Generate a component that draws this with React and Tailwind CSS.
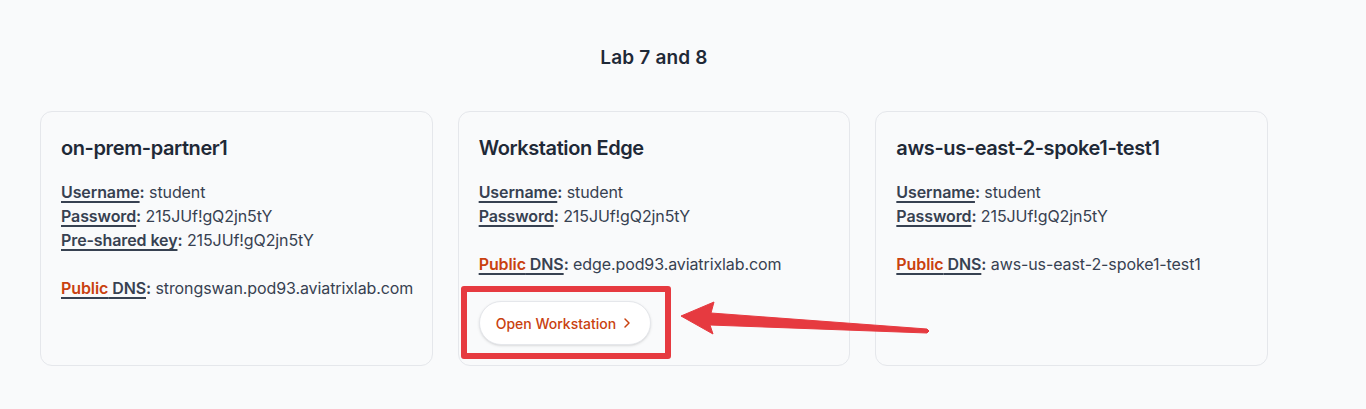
import React from "react";

function Label({ children }) {
  return (
    <span className="font-semibold">
      <span className="underline underline-offset-[3px] decoration-[1.5px]">{children}</span>:
    </span>
  );
}

function DnsLabel() {
  return (
    <span className="font-semibold">
      <span className="underline underline-offset-[3px] decoration-[1.5px]">
        <span className="text-[#c9410f]">Public</span> DNS
      </span>
      :
    </span>
  );
}

function Card({ title, rows, dns, button }) {
  return (
    <div className="rounded-xl border border-[#e5e7eb] bg-[#f9fafb] px-5 pt-[22px] pb-5">
      <h2 className="text-[20px] leading-7 font-semibold tracking-[-0.02em] text-[#1f2937]">{title}</h2>
      <div className="mt-[18px] text-[16px] leading-6 tracking-[-0.006em] text-[#374151]">
        {rows.map(([k, v]) => (
          <p key={k}>
            <Label>{k}</Label> {v}
          </p>
        ))}
        <p className="mt-6 whitespace-nowrap">
          <DnsLabel /> {dns}
        </p>
      </div>
      {button && (
        <div className="mt-[25px]">
          <div className="relative inline-block">
            <button className="flex h-11 items-center gap-[3px] rounded-full border border-[#e5e7eb] bg-white pl-4 pr-[15px] text-[14px] font-medium text-[#c9410f] shadow-sm">
              Open Workstation
              <svg width="16" height="16" viewBox="0 0 24 24" fill="none" stroke="currentColor" strokeWidth="2.2" strokeLinecap="round" strokeLinejoin="round">
                <path d="m9 18 6-6-6-6" />
              </svg>
            </button>
            <div className="pointer-events-none absolute -left-[18px] -top-[15px] -right-[20px] -bottom-[14px] rounded-[3px] border-[6px] border-[#e63a40]" />
          </div>
        </div>
      )}
    </div>
  );
}

export default function App() {
  return (
    <div
      className="relative min-h-[409px] bg-[#f9fafb] pt-[44px]"
      style={{ fontFamily: "Inter, 'Noto Sans', sans-serif" }}
    >
      <div className="ml-10 w-[1228px]">
        <h1 className="text-center text-[19px] leading-7 font-semibold tracking-[0.01em] text-[#1f2937]">Lab 7 and 8</h1>
        <div className="mt-[39px] grid grid-cols-3 gap-[25px]">
          <Card
            title="on-prem-partner1"
            rows={[
              ["Username", "student"],
              ["Password", "215JUf!gQ2jn5tY"],
              ["Pre-shared key", "215JUf!gQ2jn5tY"],
            ]}
            dns="strongswan.pod93.aviatrixlab.com"
          />
          <Card
            title="Workstation Edge"
            rows={[
              ["Username", "student"],
              ["Password", "215JUf!gQ2jn5tY"],
            ]}
            dns="edge.pod93.aviatrixlab.com"
            button
          />
          <Card
            title="aws-us-east-2-spoke1-test1"
            rows={[
              ["Username", "student"],
              ["Password", "215JUf!gQ2jn5tY"],
            ]}
            dns="aws-us-east-2-spoke1-test1"
          />
        </div>
      </div>
      <svg
        className="pointer-events-none absolute left-0 top-0"
        width="1366"
        height="409"
        viewBox="0 0 1366 409"
      >
        <polygon
          points="681,316 714,302 711,313 927,329 929,331 927,333 710,325 713,334"
          fill="#e63a40"
          stroke="#e63a40"
          strokeWidth="1"
          strokeLinejoin="round"
        />
      </svg>
    </div>
  );
}
